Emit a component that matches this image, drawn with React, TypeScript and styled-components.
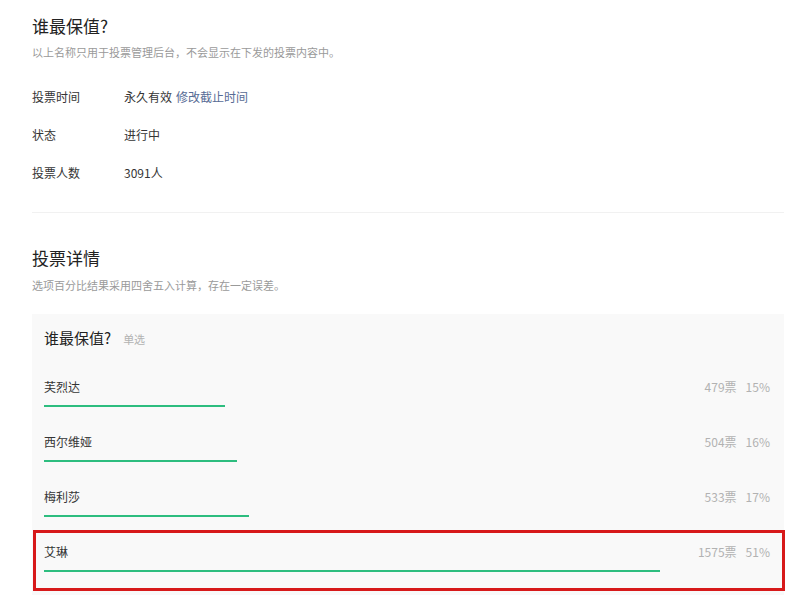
import React from "react";
import styled, { createGlobalStyle } from "styled-components";

const GlobalStyle = createGlobalStyle`
  body {
    margin: 0;
    background: #fff;
    font-family: "Noto Sans CJK SC", "Liberation Sans", sans-serif;
    color: #353535;
  }
`;

const Page = styled.div`
  width: 752px;
  padding: 14px 0 0 32px;
`;

const Title = styled.h2`
  margin: 0;
  font-size: 17px;
  font-weight: normal;
  line-height: 24px;
  color: #222;
`;

const Tip = styled.p`
  margin: 6px 0 0;
  font-size: 11px;
  line-height: 16px;
  color: #9a9a9a;
`;

const InfoList = styled.div`
  margin-top: 29px;
  display: flex;
  flex-direction: column;
  gap: 22px;
`;

const InfoRow = styled.div`
  display: flex;
  font-size: 12px;
  line-height: 16px;
`;

const Label = styled.span`
  width: 92px;
  color: #353535;
`;

const Value = styled.span`
  color: #353535;
`;

const Link = styled.a`
  color: #576b95;
  text-decoration: none;
  margin-left: 4px;
`;

const Divider = styled.hr`
  margin: 31px 0 33px;
  border: none;
  height: 1px;
  background: #f1f1f1;
`;

const DetailTip = styled(Tip)`
  margin-top: 7px;
`;

const Panel = styled.div`
  margin-top: 21px;
  background: #f9f9f9;
  padding: 14px 14px 10px 12px;
`;

const Question = styled.div`
  display: flex;
  align-items: baseline;
  gap: 12px;
  line-height: 20px;
  margin-bottom: 16px;
`;

const QuestionText = styled.span`
  font-size: 15px;
  color: #222;
`;

const QuestionType = styled.span`
  font-size: 11px;
  color: #b2b2b2;
`;

const Option = styled.div<{ $marked?: boolean }>`
  position: relative;
  padding: 14px 0 13px;

  ${(p) =>
    p.$marked &&
    `
    &::after {
      content: "";
      position: absolute;
      left: -11px;
      right: -15px;
      top: 0;
      height: 61px;
      border: 3px solid #d7191a;
      box-sizing: border-box;
      pointer-events: none;
    }
  `}
`;

const OptionHead = styled.div`
  display: flex;
  justify-content: space-between;
  font-size: 12px;
  line-height: 16px;
`;

const OptionName = styled.span`
  color: #353535;
`;

const OptionStat = styled.span`
  color: #b2b2b2;
  font-size: 12px;

  span + span {
    margin-left: 9px;
  }
`;

const Bar = styled.div`
  margin-top: 10px;
  height: 2px;
  background: #2dbd7f;
`;

const options = [
  { name: "芙烈达", votes: 479, pct: 15 },
  { name: "西尔维娅", votes: 504, pct: 16 },
  { name: "梅利莎", votes: 533, pct: 17 },
  { name: "艾琳", votes: 1575, pct: 51, marked: true },
];

export default function App() {
  return (
    <>
      <GlobalStyle />
      <Page>
        <Title>谁最保值?</Title>
        <Tip>以上名称只用于投票管理后台，不会显示在下发的投票内容中。</Tip>

        <InfoList>
          <InfoRow>
            <Label>投票时间</Label>
            <Value>
              永久有效<Link href="#">修改截止时间</Link>
            </Value>
          </InfoRow>
          <InfoRow>
            <Label>状态</Label>
            <Value>进行中</Value>
          </InfoRow>
          <InfoRow>
            <Label>投票人数</Label>
            <Value>3091人</Value>
          </InfoRow>
        </InfoList>

        <Divider />

        <Title>投票详情</Title>
        <DetailTip>选项百分比结果采用四舍五入计算，存在一定误差。</DetailTip>

        <Panel>
          <Question>
            <QuestionText>谁最保值?</QuestionText>
            <QuestionType>单选</QuestionType>
          </Question>
          {options.map((o) => (
            <Option key={o.name} $marked={o.marked}>
              <OptionHead>
                <OptionName>{o.name}</OptionName>
                <OptionStat>
                  <span>{o.votes}票</span>
                  <span>{o.pct}%</span>
                </OptionStat>
              </OptionHead>
              <Bar style={{ width: Math.round(o.pct * 12.07) }} />
            </Option>
          ))}
        </Panel>
      </Page>
    </>
  );
}
